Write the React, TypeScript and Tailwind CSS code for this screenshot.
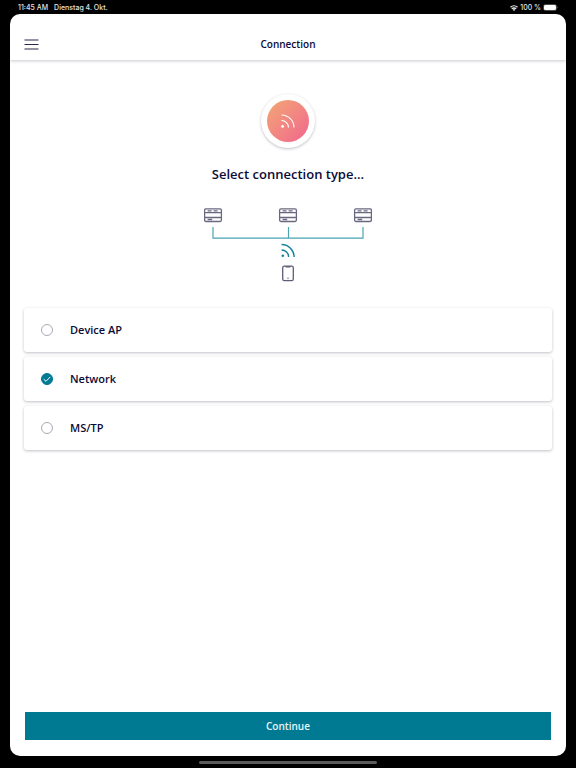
import { useState } from "react";

const connectionTypes = [
  { id: "device-ap", label: "Device AP" },
  { id: "network", label: "Network" },
  { id: "ms-tp", label: "MS/TP" },
];

function StatusBar() {
  return (
    <div className="flex h-[14px] items-center justify-between px-[18px] pt-px font-['Inter',sans-serif] text-[7px] leading-[13px] font-medium text-[#e4e4e4]">
      <div className="flex gap-[6px]">
        <span>11:45 AM</span>
        <span>Dienstag 4. Okt.</span>
      </div>
      <div className="flex items-center gap-[2px]">
        <svg width="8" height="6" viewBox="0 0 16 12" fill="none" stroke="currentColor" strokeWidth="2.6">
          <path d="M1 4.6a10 10 0 0 1 14 0M3.6 7.8a6.2 6.2 0 0 1 8.8 0" />
          <path d="M8 12 5.4 9.5a3.6 3.6 0 0 1 5.2 0z" fill="currentColor" stroke="none" />
        </svg>
        <span>100 %</span>
        <svg width="15" height="7" viewBox="0 0 15 7">
          <rect x="0.5" y="0.5" width="13" height="6" rx="1.8" fill="none" stroke="#777" strokeWidth="0.6" />
          <rect x="1" y="1" width="12" height="5" rx="1.2" fill="#fff" />
          <path d="M14.2 2.6v1.8a1 1 0 0 0 0-1.8z" fill="#777" />
        </svg>
      </div>
    </div>
  );
}

function DeviceIcon({ x }: { x: number }) {
  return (
    <g transform={`translate(${x} 0)`} stroke="#6a6881" fill="none">
      <rect x="0.6" y="0.9" width="16.8" height="12.6" rx="1.4" strokeWidth="1.3" />
      <path d="M1 4.7h16M1 9.5h16" strokeWidth="1.3" />
      <path d="M3.6 2.8h4M9.6 2.8h4M3.6 11.5h4.6" strokeWidth="1.3" />
    </g>
  );
}

function NetworkDiagram() {
  return (
    <svg width="168" height="75" viewBox="0 0 168 75" fill="none" aria-hidden="true">
      <DeviceIcon x={0} />
      <DeviceIcon x={75} />
      <DeviceIcon x={150} />
      <path d="M9 19v11.2h150V19M84.5 19v11" stroke="#4aa3b3" strokeWidth="1.2" />
      <g stroke="#14829a" strokeWidth="1.4">
        <path d="M77.6 36.5a12.5 12.5 0 0 1 12.5 12.5" />
        <path d="M77.6 42a7 7 0 0 1 7 7" />
        <circle cx="78.8" cy="47.7" r="1.3" fill="#14829a" stroke="none" />
      </g>
      <rect x="78.7" y="58.2" width="10.6" height="14.4" rx="1.6" stroke="#5f5d78" strokeWidth="1.3" />
      <path d="M81.5 58.8h5" stroke="#5f5d78" strokeWidth="1.4" />
      <circle cx="84" cy="70.2" r="0.7" fill="#5f5d78" />
    </svg>
  );
}

export default function App() {
  const [selected, setSelected] = useState("network");

  return (
    <div className="flex min-h-screen flex-col bg-black font-['Open_Sans','Noto_Sans',sans-serif] text-[#0b0b37]">
      <StatusBar />

      <div className="mx-[10px] flex grow flex-col overflow-hidden rounded-[10px] bg-white">
        <header className="grid h-[46px] grid-cols-[1fr_auto_1fr] items-center px-[14px] pt-[14px] shadow-[0_1px_3px_rgba(0,0,40,0.22)]">
          <button type="button" aria-label="Menu" className="justify-self-start">
            <svg width="15" height="11" viewBox="0 0 15 11" stroke="#29294f" strokeWidth="1.2">
              <path d="M0.5 1h14M0.5 5.5h14M0.5 10h14" />
            </svg>
          </button>
          <h1 className="text-[10px] leading-4 font-semibold">Connection</h1>
        </header>

        <main className="flex grow flex-col px-[14px] pt-[34px] pb-4">
          <div className="flex flex-col items-center">
            <div className="flex size-[54px] items-center justify-center rounded-full bg-white shadow-[0_1px_3px_rgba(0,0,40,0.25)]">
              <div className="flex size-[42px] items-center justify-center rounded-full bg-linear-to-br from-[#f2a673] to-[#f0648c]">
                <svg width="14" height="14" viewBox="0 0 14 14" fill="none" stroke="#fff" strokeWidth="1.1">
                  <path d="M0.5 1a12.5 12.5 0 0 1 12.5 12.5M0.5 6.5a7 7 0 0 1 7 7" />
                  <circle cx="1.6" cy="12.4" r="1.4" fill="#fff" stroke="none" />
                </svg>
              </div>
            </div>
            <h2 className="mt-4 mb-6 text-[13px] leading-5 font-semibold">Select connection type...</h2>
            <NetworkDiagram />
          </div>

          <div role="radiogroup" aria-label="Connection type" className="mt-[25px] flex flex-col gap-[5px]">
            {connectionTypes.map((type) => (
              <label
                key={type.id}
                className="flex h-[44px] items-center gap-[17px] rounded-[3px] bg-white pl-[17px] text-[11px] leading-4 font-semibold shadow-[0_1px_3px_rgba(0,0,40,0.25)]"
              >
                <span className="grid place-items-center">
                  <input
                    type="radio"
                    name="connection"
                    checked={selected === type.id}
                    onChange={() => setSelected(type.id)}
                    className="col-start-1 row-start-1 size-3 appearance-none rounded-full border border-[#a9a9b8] checked:border-[#007993] checked:bg-[#007993]"
                  />
                  {selected === type.id && (
                    <svg width="8" height="8" viewBox="0 0 8 8" fill="none" stroke="#fff" className="pointer-events-none z-10 col-start-1 row-start-1">
                      <path d="M0.7 4.2 3 6.3 7.3 1.9" />
                    </svg>
                  )}
                </span>
                {type.label}
              </label>
            ))}
          </div>

          <div className="mt-auto px-px">
            <button type="button" className="h-7 w-full bg-[#007993] text-[10px] leading-4 font-semibold text-[#e6f6f8]">
              Continue
            </button>
          </div>
        </main>
      </div>

      <div className="flex h-3 items-center justify-center">
        <div className="h-[3px] w-[31%] rounded-full bg-[#5a5a5a]" />
      </div>
    </div>
  );
}
